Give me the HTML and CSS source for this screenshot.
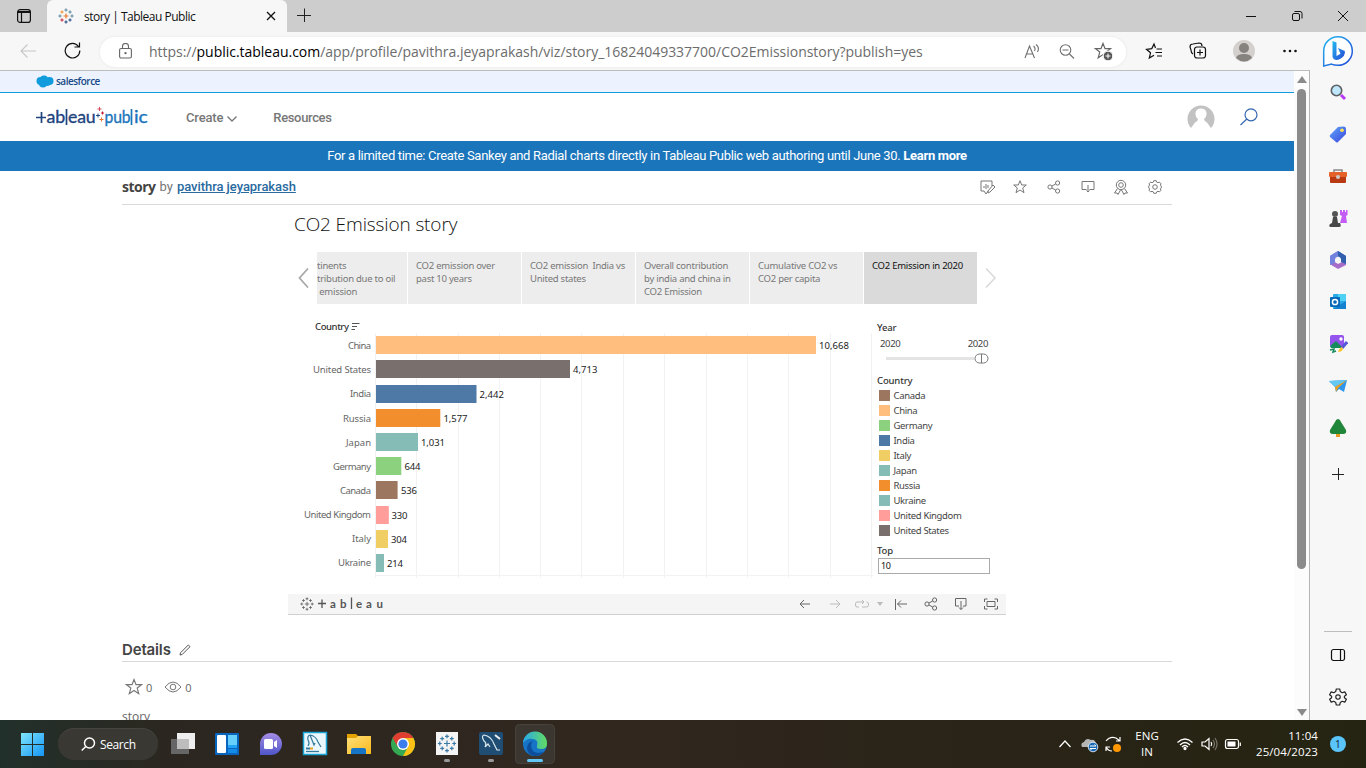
FILE: index.html
```html
<!DOCTYPE html>
<html lang="en">
<head>
<meta charset="utf-8">
<title>story | Tableau Public</title>
<link rel="stylesheet" href="styles.css">
</head>
<body>
<svg width="0" height="0" class="defs">
  <defs>
    <g id="plus"><path d="M-1.6 0H1.6M0-1.6V1.6"/></g>
    <g id="spark">
      <path d="M-2.5 0H2.5M0-2.5V2.5"/>
      <use href="#plus" x="0" y="-6"/><use href="#plus" x="0" y="6"/><use href="#plus" x="-6" y="0"/><use href="#plus" x="6" y="0"/>
      <use href="#plus" x="-4" y="-4"/><use href="#plus" x="4" y="-4"/><use href="#plus" x="-4" y="4"/><use href="#plus" x="4" y="4"/>
    </g>
    <path id="star" d="M0-6.3L1.7-2H6.3L2.7.9 4 5.7 0 3-4 5.7-2.7.9-6.3-2H-1.7Z"/>
    <g id="share"><circle cx="-4" cy="0" r="2.1"/><circle cx="3.6" cy="-4" r="2.1"/><circle cx="3.6" cy="4" r="2.1"/><path d="M-2.1-1L1.7-3M-2.1 1L1.7 3"/></g>
    <linearGradient id="win" x1="0" y1="0" x2="1" y2="1"><stop offset="0" stop-color="#7fe6fb"/><stop offset="1" stop-color="#1495f5"/></linearGradient>
    <linearGradient id="bing" x1="0" y1="0" x2="1" y2="1"><stop offset="0" stop-color="#24b9ee"/><stop offset="1" stop-color="#2448d8"/></linearGradient>
    <linearGradient id="tag" x1="0" y1="0" x2="1" y2="1"><stop offset="0" stop-color="#5fa5fb"/><stop offset="1" stop-color="#3a46dc"/></linearGradient>
    <linearGradient id="edgeA" x1="0" y1="0" x2="1" y2="0"><stop offset="0" stop-color="#2aa9e8"/><stop offset="1" stop-color="#62dc62"/></linearGradient>
    <linearGradient id="folder" x1="0" y1="0" x2="1" y2="1"><stop offset="0" stop-color="#ffe07a"/><stop offset="1" stop-color="#f9b81c"/></linearGradient>
    <linearGradient id="chat" x1="0" y1="0" x2="0" y2="1"><stop offset="0" stop-color="#a58de6"/><stop offset="1" stop-color="#4f55c8"/></linearGradient>
  </defs>
</svg>

<header class="tabstrip">
  <svg class="workspaces" width="14" height="14" fill="none" stroke="#111" stroke-width="1.2"><rect x=".6" y=".6" width="12.800" height="12.800" rx="2.500"/><path d="M1 3H13" stroke-width="2"/><path d="M4.500 4V13"/></svg>
  <div class="tab">
    <svg width="16" height="16" viewBox="-8 -8 16 16" fill="none" stroke-width="1"><path d="M-2.500 0H2.500M0-2.500V2.500" stroke="#e8762c" stroke-width="1.200"/><g stroke="#5b879b"><use href="#plus" y="-6"/><use href="#plus" x="6"/><use href="#plus" x="-6"/></g><g stroke="#eb912c"><use href="#plus" x="-4" y="-4"/></g><g stroke="#59879b"><use href="#plus" x="4" y="-4"/></g><g stroke="#c72035"><use href="#plus" x="-4" y="4"/></g><g stroke="#1f447e"><use href="#plus" x="4" y="4"/><use href="#plus" y="6"/></g></svg>
    <span class="tab-title">story | Tableau Public</span>
    <svg class="tab-close" width="10" height="10" stroke="#111" stroke-width="1.3"><path d="M1 1L9 9M9 1L1 9"/></svg>
  </div>
  <svg class="newtab" width="14" height="14" stroke="#222" stroke-width="1"><path d="M0 7.500H14M7.500 .5V14"/></svg>
  <div class="winctl">
    <svg width="46" height="32" stroke="#111" fill="none"><path d="M18 16.500H28"/></svg>
    <svg width="46" height="32" stroke="#111" fill="none"><rect x="18.500" y="13.500" width="7" height="7" rx="1.500"/><path d="M20.500 11.500H26A2 2 0 0 1 28 13.500V18.500"/></svg>
    <svg width="46" height="32" stroke="#111" fill="none"><path d="M18 11L28 21M28 11L18 21"/></svg>
  </div>
</header>

<div class="toolbar">
  <svg class="back" width="16" height="14" fill="none" stroke="#c6c6c6" stroke-width="1.100"><path d="M16 7H1M7.500 .5L1 7L7.500 13.500"/></svg>
  <svg class="reload" width="17" height="17" fill="none" stroke="#111" stroke-width="1.200"><path d="M14.500 4.500A7.300 7.300 0 1 0 15.800 8.500M15.500 .5V5H10.500"/></svg>
  <div class="address">
    <svg class="lock" width="13" height="16" fill="none" stroke="#666" stroke-width="1.100"><rect x=".6" y="5.500" width="11.800" height="9.500" rx="1.500"/><path d="M3.500 5.500V3.500A3 3 0 0 1 9.500 3.500V5.500"/><circle cx="6.500" cy="10.200" r=".6" fill="#666"/></svg>
    <span class="url">https://<b>public.tableau.com</b>/app/profile/pavithra.jeyaprakash/viz/story_16824049337700/CO2Emissionstory?publish=yes</span>
    <div class="address-tools">
      <svg width="36" height="30" viewBox="-18 -15 36 30" fill="none" stroke="#707070" stroke-width="1.100"><path d="M-7 6L-2.500-6L2.500 6M-5.500 2H1M1.500-6Q4-4 2.500-1M4-7.500Q8-4.500 5.500 0"/></svg>
      <svg width="36" height="30" viewBox="-18 -15 36 30" fill="none" stroke="#707070" stroke-width="1.100"><circle cx="-2.500" cy="-2" r="5.300"/><path d="M1.500 2L6 6.500M-5.500-2H.5"/></svg>
      <svg width="36" height="30" viewBox="-18 -15 36 30" fill="none" stroke="#666" stroke-width="1"><use href="#star" transform="translate(-1 -1) scale(1.2)"/><circle cx="4" cy="4" r="4.800" fill="#555" stroke="#fff"/><path d="M1.500 4H6.500M4 1.500V6.500" stroke="#fff"/></svg>
    </div>
  </div>
  <div class="browser-tools">
    <svg width="44" height="38" viewBox="-22 -19 44 38" fill="none" stroke="#111" stroke-width="1.200"><path d="M1.500-3L0-7-2.200-2.400-7.500-1.700-3.500 1.800-4.700 7 0 4.300M2.500-2H8M1.500 1.500H8M3 5H8"/></svg>
    <svg width="44" height="38" viewBox="-22 -19 44 38" fill="none" stroke="#111" stroke-width="1.200"><path d="M-5 3Q-7 2-7-1L-8-4Q-8-7-5-7L1-8Q4-8 4-5"/><rect x="-3.500" y="-4" width="11" height="11" rx="2.500"/><path d="M-1 1.500H5M2-1.500V4.500"/></svg>
    <svg width="48" height="38" viewBox="-24 -19 48 38"><circle r="11" fill="#d3d0cd"/><circle cy="-3" r="5" fill="#86827e"/><path d="M-8 7Q-7 3 0 3Q7 3 8 7Q0 14-8 7" fill="#86827e"/></svg>
    <svg width="44" height="38" viewBox="-22 -19 44 38" fill="#111"><circle cx="-5.500" r="1.300"/><circle r="1.300"/><circle cx="5.500" r="1.300"/></svg>
    <svg class="bing" width="34" height="34" viewBox="-17 -17 34 34"><path d="M-14.300 15V0A14.300 14.300 0 1 1 0 14.300Q-4 14.300-6.500 13.100Z" fill="#fff" stroke="url(#bing)" stroke-width="1.500"/><path d="M-5.500-10L-1.500-8.500V5L2.500 2.800L0-3L6.800 0Q8 5 1 8.500Q-4 10-5.500 6Z" fill="url(#bing)"/></svg>
  </div>
</div>

<div class="middle">
  <div class="viewport">
    <main class="page">
      <div class="sf-bar">
        <svg width="18" height="13" fill="#109cdc"><circle cx="4.500" cy="6" r="4"/><circle cx="8" cy="4.500" r="4"/><circle cx="13.500" cy="6" r="4"/><circle cx="7" cy="8.500" r="4"/><circle cx="11" cy="7.500" r="3.500"/></svg>
        <span>salesforce</span>
      </div>
      <nav class="site-nav">
        <svg class="logo" width="114" height="26" viewBox="0 0 114 26">
          <g stroke="#1f447e" stroke-width="1.700"><path d="M0 13.500H10M5.500 8V19M30.500 5V21"/></g>
          <path d="M95.500 5V21" stroke="#1b75bb" stroke-width="1.700"/>
          <g class="logo-a"><text x="10.500" y="18.500" textLength="18.500" lengthAdjust="spacingAndGlyphs">ab</text><text x="32" y="18.500" textLength="27.500" lengthAdjust="spacingAndGlyphs">eau</text></g>
          <g class="logo-b"><text x="68.500" y="18.500" textLength="26" lengthAdjust="spacingAndGlyphs">pub</text><text x="98" y="18.500" textLength="13.500" lengthAdjust="spacingAndGlyphs">ic</text></g>
          <g stroke-width="1"><path d="M62 9.500V13.500M60 11.500H64" stroke="#1f447e"/><path d="M63.500 3V7M61.500 5H65.500" stroke="#d9485f"/><path d="M66.500 7.500V10.500M65 9H68" stroke="#c72035"/><path d="M65.500 13.500V17.500M63.500 15.500H67.500" stroke="#e8762c"/></g>
        </svg>
        <a class="nav-create">Create</a>
        <svg class="caret" width="10" height="6" fill="none" stroke="#777" stroke-width="1.300"><path d="M.5 .5L5 5L9.500 .5"/></svg>
        <a class="nav-res">Resources</a>
        <svg class="user" width="28" height="24" viewBox="0 0 28 24"><path d="M4 24A13.500 13.500 0 1 1 24 24L20 18.500Q17 17 17 15Q20 13 19.500 9Q19 4.500 14 4.500Q9 4.500 8.500 9Q8 13 11 15Q11 17 8 18.500Z" fill="#c2c2c2"/></svg>
        <svg class="find" width="18" height="18" fill="none" stroke="#3467b0" stroke-width="1.200"><circle cx="11" cy="6.800" r="6"/><path d="M6.800 11L.5 17"/></svg>
      </nav>
      <div class="banner"><span>For a limited time: Create Sankey and Radial charts directly in Tableau Public web authoring until June 30.</span>&nbsp;<b>Learn more</b></div>

      <section class="column">
        <div class="byline">
          <b>story</b><span class="by">by</span><a>pavithra jeyaprakash</a>
          <div class="actions">
            <svg viewBox="-10 -10 20 20"><path d="M5-1V-6H-6V4H-3L-1 7 1 4M-3-1V1M-1-3V2M1-2V1M1 4L6-2 8 0 3 5 1 6Z"/></svg>
            <svg viewBox="-10 -10 20 20"><use href="#star"/></svg>
            <svg viewBox="-10 -10 20 20"><use href="#share"/></svg>
            <svg viewBox="-10 -10 20 20"><path d="M-1.500 2.500H-6V-5.500H6V2.500H1.500M0-2V5M-1.500 3.500L0 5 1.500 3.500"/></svg>
            <svg viewBox="-10 -10 20 20"><circle cy="-2" r="4.700"/><circle cy="-2" r="2.300"/><path d="M-3.500 1.500L-6.500 6H-4L-3 7.500-.5 3M3.500 1.500L6.500 6H4L3 7.500 .5 3"/></svg>
            <svg viewBox="-10 -10 20 20"><path d="M-1.200-6.300H1.200L1.700-4.900 3-4.300 4.400-4.900 6-3.200 5.300-1.900 6.300-.9V.9L5.300 1.900 6 3.200 4.400 4.900 3 4.300 1.700 4.900 1.200 6.300H-1.200L-1.700 4.900-3 4.300-4.400 4.900-6 3.200-5.300 1.900-6.300 .9V-.9L-5.300-1.900-6-3.200-4.400-4.900-3-4.300-1.700-4.900Z"/><circle r="2.300"/></svg>
          </div>
        </div>

        <div class="viz">
          <h1>CO2 Emission story</h1>
          <div class="story-nav">
            <svg width="11" height="20" fill="none" stroke="#a8a8a8" stroke-width="1.700"><path d="M10 .5L1.500 10L10 19.500"/></svg>
            <div class="points">
              <div class="point first"><p>tinents<br>tribution due to oil<br>&nbsp;emission</p></div>
              <div class="point">CO2 emission over<br>past 10 years</div>
              <div class="point">CO2 emission&nbsp; India vs<br>United states</div>
              <div class="point">Overall contribution<br>by india and china in<br>CO2 Emission</div>
              <div class="point">Cumulative CO2 vs<br>CO2 per capita</div>
              <div class="point active">CO2 Emission in 2020</div>
            </div>
            <svg width="11" height="20" fill="none" stroke="#d8d8d8" stroke-width="1.500"><path d="M1 .5L10 10L1 19.500"/></svg>
          </div>

          <div class="dash">
            <svg class="chart" width="585" height="264" viewBox="288 316 585 264">
              <path class="grid" d="M375.500 333V578M416.500 333V578M458.500 333V578M499.500 333V578M540.500 333V578M581.500 333V578M623.500 333V578M664.500 333V578M706.500 333V578M747.500 333V578M788.500 333V578M830.500 333V578M871.500 333V578M376 575.500H873"/>
              <text class="hd" x="315" y="330" textLength="34">Country</text>
              <path d="M352 323.500H359.500M352 326.500H357M351.500 329.500H355" stroke="#555" stroke-width="1.200"/>
              <g class="bars">
                <rect x="376" y="336" width="440" height="18" fill="#ffbe7d"/>
                <rect x="376" y="360" width="194" height="18" fill="#79706e"/>
                <rect x="376" y="385" width="100.500" height="18" fill="#4e79a7"/>
                <rect x="376" y="409" width="64.300" height="18" fill="#f28e2b"/>
                <rect x="376" y="433" width="42" height="18" fill="#86bcb6"/>
                <rect x="376" y="457" width="25.300" height="18" fill="#8cd17d"/>
                <rect x="376" y="481" width="21.600" height="18" fill="#9d7660"/>
                <rect x="376" y="506" width="12.800" height="18" fill="#ff9d9a"/>
                <rect x="376" y="530" width="12" height="18" fill="#f1ce63"/>
                <rect x="376" y="554" width="8" height="18" fill="#86bcb6"/>
              </g>
              <g class="names">
                <text x="348" y="349" textLength="23">China</text><text x="313" y="373" textLength="58">United States</text><text x="350" y="397" textLength="21">India</text><text x="343" y="422" textLength="28">Russia</text><text x="346" y="446" textLength="25">Japan</text><text x="333" y="470" textLength="38">Germany</text><text x="340" y="494" textLength="31">Canada</text><text x="304" y="518" textLength="67">United Kingdom</text><text x="352" y="542" textLength="19">Italy</text><text x="338" y="566" textLength="33">Ukraine</text>
              </g>
              <g class="vals">
                <text x="819" y="349" textLength="30">10,668</text><text x="573" y="373" textLength="24.500">4,713</text><text x="479.500" y="398" textLength="24.500">2,442</text><text x="443.500" y="422" textLength="24">1,577</text><text x="421" y="446" textLength="24">1,031</text><text x="404.500" y="470" textLength="16">644</text><text x="401" y="494" textLength="16">536</text><text x="391.500" y="519" textLength="16">330</text><text x="391" y="543" textLength="16">304</text><text x="387" y="567" textLength="16">214</text>
              </g>
            </svg>
            <aside class="filters">
              <h2>Year</h2>
              <div class="range"><span>2020</span><span>2020</span></div>
              <div class="slider"><i></i><svg width="15" height="11" fill="#fff" stroke="#777"><rect x="1" y="1" width="13" height="9" rx="4.500"/><path d="M7.500 1V10"/></svg></div>
              <h2 class="lg">Country</h2>
              <ul>
                <li class="k1">Canada</li><li class="k2">China</li><li class="k3">Germany</li><li class="k4">India</li><li class="k5">Italy</li><li class="k6">Japan</li><li class="k7">Russia</li><li class="k8">Ukraine</li><li class="k9">United Kingdom</li><li class="k10">United States</li>
              </ul>
              <h2 class="top">Top</h2>
              <div class="field">10</div>
            </aside>
          </div>

          <footer class="vizbar">
            <svg width="14" height="14" viewBox="-8 -8 16 16" fill="none" stroke="#666" stroke-width="1"><use href="#spark"/></svg>
            <svg class="wordmark" width="68" height="16" viewBox="0 0 68 16"><path d="M0 7.500H8M4 3.500V12M33.500 1.500V13" stroke="#555" stroke-width="1.300"/><text x="12" y="11.500">a</text><text x="22" y="11.500">b</text><text x="38" y="11.500">e</text><text x="48" y="11.500">a</text><text x="58.500" y="11.500">u</text></svg>
            <div class="vizbar-tools">
              <svg width="30" height="16" viewBox="-15 -8 30 16"><path d="M5 0H-5M-1-4L-5 0L-1 4"/></svg>
              <svg class="dim" width="29" height="16" viewBox="-15 -8 29 16"><path d="M-5 0H5M1-4L5 0L1 4"/></svg>
              <svg class="dim" width="24" height="16" viewBox="-13 -8 24 16"><path d="M-3 3H-5Q-6.500 3-6.500 1V0Q-6.500-2-5-2H2M0-4L2-2L0 0M0 3H4.500Q6.500 3 6.500 1V0Q6.500-2 4.500-2"/></svg>
              <svg width="14" height="16" viewBox="-7 -8 14 16"><path d="M-3-2H3L0 2Z" fill="#bbb" stroke="none"/></svg>
              <svg width="29" height="16" viewBox="-14 -8 29 16"><path d="M-5.500-5V6M6 0H-3.500M0-3.500L-3.500 0L0 3.500"/></svg>
              <svg width="30" height="16" viewBox="-15 -8 30 16"><use href="#share"/></svg>
              <svg width="30" height="16" viewBox="-15 -8 30 16"><path d="M-2 2H-5.500V-5.500H5V2H2M0-3V5.500M-2 3.500L0 5.500 2 3.500"/></svg>
              <svg width="30" height="16" viewBox="-15 -8 30 16"><path d="M-6.500-2V-5H-3.500M3.500-5H6.500V-2M6.500 2V5H3.500M-3.500 5H-6.500V2M-4-2.500H4V2.500H-4Z"/></svg>
            </div>
          </footer>
        </div>

        <div class="details"><h3>Details</h3><svg width="12" height="12" fill="none" stroke="#555"><path d="M1 11L1.500 8.800L9.300 1L11 2.700L3.200 10.500Z"/></svg></div>
        <div class="stats">
          <svg width="18" height="18" viewBox="-9 -9 18 18" fill="none" stroke="#777"><use href="#star" transform="scale(1.180)"/></svg><span>0</span>
          <svg class="eye" width="18" height="12" fill="none" stroke="#777"><path d="M1 6Q9-4 17 6Q9 16 1 6Z"/><circle cx="9" cy="6" r="2.800"/></svg><span>0</span>
        </div>
        <p class="desc">story</p>
      </section>
    </main>
    <div class="scrollbar"><i class="up"></i><i class="thumb"></i><i class="down"></i></div>
  </div>

  <aside class="sidebar">
    <svg viewBox="-10 -10 20 20"><path d="M3 3L7 7" stroke="#b83af0" stroke-width="3"/><circle cx="-1.500" cy="-1.500" r="5.200" fill="#bfe6fb" stroke="#5e6163" stroke-width="1.600"/></svg>
    <svg viewBox="-10 -10 20 20"><path d="M-8 1L0-7L6-7.500Q8-7.500 8-5V0L0 8Q-1 9-2 8L-8 3Q-8.500 2-8 1Z" fill="url(#tag)"/><circle cx="4" cy="-3.800" r="1.800" fill="#ffe34d"/></svg>
    <svg viewBox="-10 -10 20 20"><path d="M-4-3V-6H4V-3" fill="none" stroke="#888" stroke-width="1.500"/><rect x="-9" y="-4" width="18" height="5" rx="1" fill="#e4622a"/><path d="M-8 1H8V6Q8 7 7 7H-7Q-8 7-8 6Z" fill="#b93a12"/><circle cy="1" r="2" fill="#ccc"/></svg>
    <svg viewBox="-10 -10 20 20"><path d="M2-8H4V-6H5V-8H7V-6H8V-8H9.500V-3L8 -2 9 5H2L4-2 2-3Z" fill="#c45cf6"/><circle cx="-3" cy="-4" r="3" fill="#555"/><path d="M-5-1H-1L0 5H2Q4 9 1 9H-7Q-10 9-8 6L-6 5Z" fill="#484848"/></svg>
    <svg viewBox="-10 -10 20 20"><path d="M0-9L8-4V3L3 0L0-4L-3 0V7L-8 4V-4Z" fill="#4a78d8"/><path d="M-8 4L-3 2L0 4L8 0V5L0 9Z" fill="#a66cc8"/><path d="M-8-4L0-9V-4L-3-1V3L-8 5Z" fill="#7382dc"/><path d="M8-4V4L3 2V-2L0-4V-9Z" fill="#315fae"/><circle r="3" fill="#f7f7f7"/></svg>
    <svg viewBox="-10 -10 20 20"><rect x="-5" y="-8" width="13" height="15" rx="1" fill="#29a8ea"/><path d="M0-8H8V-1H0Z" fill="#50d0f5"/><path d="M-5 7L8-1V7Z" fill="#1480d0"/><rect x="-8" y="-5" width="10" height="10" rx="1" fill="#0669b8"/><circle cx="-3" r="2.600" fill="none" stroke="#fff" stroke-width="1.500"/></svg>
    <svg viewBox="-10 -10 20 20"><rect x="-8" y="-9" width="14" height="12" rx="2" fill="#9553ed"/><path d="M-8 2L-2-3L5 4H-7Z" fill="#168b5c"/><circle cx="3" cy="-5" r="1.700" fill="#fff"/><path d="M9-2L4 4" stroke="#5857d5" stroke-width="3"/><path d="M4 3Q1 4 0 8Q4 8 5 5Z" fill="#ffc52c"/><path d="M-8 6L-4 5L-5 8L-2 7" stroke="#168b5c" fill="none" stroke-width="1.500"/></svg>
    <svg viewBox="-10 -10 20 20"><path d="M-9-5L9-6L6 6L1 3L-2 6L-3 1Z" fill="#3096eb"/><path d="M-9-5L9-6L-3 1Z" fill="#65c8f1"/><path d="M9-6L-3 1L-2 6L0 2Z" fill="#efa21c"/></svg>
    <svg viewBox="-10 -10 20 20"><rect x="-2" y="3" width="4" height="6" fill="#e79b20"/><path d="M0-9Q2-9 3-6L8 2Q9 6 5 6H-5Q-9 6-8 2L-3-6Q-2-9 0-9Z" fill="#208639"/></svg>
    <svg class="add" viewBox="-10 -10 20 20"><path d="M-6 .5H6M.5-6V6" stroke="#222" stroke-width="1"/></svg>
    <div class="side-bottom">
      <svg viewBox="-10 -10 20 20" fill="none" stroke="#111" stroke-width="1.200"><rect x="-6.500" y="-5.500" width="13" height="11" rx="2"/><path d="M2.500-5.500V5.500"/></svg>
      <svg viewBox="-10 -10 20 20" fill="none" stroke="#222" stroke-width="1.200"><path d="M-1.700-8H1.700L2.300-5.400 4.200-4.300 6.800-5.100 8.400-2.200 6.400-.8V.8L8.400 2.200 6.800 5.100 4.200 4.300 2.300 5.400 1.700 8H-1.700L-2.300 5.400-4.200 4.300-6.800 5.100-8.400 2.200-6.400 .8V-.8L-8.400-2.200-6.800-5.100-4.200-4.300-2.300-5.400Z" stroke-linejoin="round"/><circle r="2.200"/></svg>
    </div>
  </aside>
</div>

<footer class="taskbar">
  <svg class="start" width="24" height="24" fill="url(#win)"><path d="M0 0H11V11H0ZM12 0H23V11H12ZM0 12H11V23H0ZM12 12H23V23H12Z"/></svg>
  <div class="search"><svg width="15" height="15" fill="none" stroke="#fff" stroke-width="1.500"><circle cx="8.500" cy="6" r="5"/><path d="M4.800 9.500L.7 13.500"/></svg><span>Search</span></div>
  <div class="apps">
    <svg viewBox="-22 -24 44 48"><rect x="-6" y="-11" width="18" height="16" fill="#eee"/><rect x="-12" y="-5" width="18" height="15" fill="#666"/><path d="M-6-5H6V5H-6Z" fill="#bdbdbd"/></svg>
    <svg viewBox="-22 -24 44 48"><rect x="-12" y="-11" width="24" height="22" rx="1" fill="#0865bd"/><rect x="-10" y="-9" width="9" height="18" rx="1" fill="#fff"/><rect x="1" y="-9" width="9" height="10" fill="#66d0fb"/><rect x="1" y="1" width="9" height="3" fill="#21a3f5"/><rect x="1" y="5" width="9" height="4" fill="#148be7"/></svg>
    <svg viewBox="-22 -24 44 48"><path d="M-11 11V0A11 11 0 1 1 0 11Z" fill="url(#chat)"/><rect x="-7" y="-5" width="9" height="10" rx="1.500" fill="#fff"/><path d="M3-2L6-4V4L3 2Z" fill="#fff"/></svg>
    <svg viewBox="-22 -24 44 48"><rect x="-11.500" y="-11.500" width="23" height="22" fill="#eaf8fd" stroke="#18a4d4" stroke-width="1.500"/><path d="M-7 2Q-5-1-7-4Q-8-8-5-9Q1-8 3-2L6 3M-5-9L-1 1L0-1" fill="none" stroke="#37779a" stroke-width="1.200"/><path d="M-9 4.500H-5" stroke="#37779a" stroke-width="2"/><path d="M-5 4.500H-2" stroke="#f0a020" stroke-width="2"/><path d="M-9 7.500H4" stroke="#37779a" stroke-width="1.300"/></svg>
    <svg viewBox="-22 -24 44 48"><path d="M-12-10H-3L-1-8H12V10H-12Z" fill="#e4a100"/><path d="M-12-6H-3L-1-8H12V10H-12Z" fill="url(#folder)"/><path d="M-8 10V6Q-8 4-6 4H5Q7 4 7 6V10Z" fill="#1775c8"/></svg>
    <svg viewBox="-22 -24 44 48"><circle r="12" fill="#35a853"/><path d="M0 0L-10.400-6A12 12 0 0 1 10.400-6Z" fill="#e23d31"/><path d="M0-6H10.400A12 12 0 0 1 0 12L5 3Z" fill="#fbc116"/><path d="M-10.400-6L-5 3L0-6Z" fill="#e23d31"/><circle r="6" fill="#fff"/><circle r="4.600" fill="#3b7ded"/></svg>
    <svg viewBox="-22 -24 44 48"><rect x="-11" y="-12" width="22" height="23" fill="#f4f4f4"/><g fill="none" stroke="#3a78a6" stroke-width="1" transform="translate(0 -.5) scale(1.200)"><use href="#spark"/></g><rect x="-3" y="15" width="6" height="3" rx="1.500" fill="#999"/></svg>
    <svg viewBox="-22 -24 44 48"><rect x="-12" y="-12" width="24" height="23" rx="2" fill="#1f4d73"/><path d="M-6 3Q-4-1-7-3Q-10-8-7-9Q0-8 3 0L6 6 9 6M-6 3L-3 0L-1 3" fill="none" stroke="#dce8ef" stroke-width="1.200"/><path d="M4-9L9-5" stroke="#eee" stroke-width="2"/><rect x="-3" y="15" width="6" height="3" rx="1.500" fill="#999"/></svg>
    <svg viewBox="-22 -24 44 48"><rect x="-19.500" y="-19.500" width="39" height="39" rx="4" fill="#3b3730" stroke="#474239"/><circle r="12" fill="#1673c5"/><path d="M-12-1A12 12 0 0 1 12 0Q12 5 6 5Q1 5 2 2Q4-4-2-5Q-8-6-12-1Z" fill="url(#edgeA)"/><path d="M-4 1Q-4 8 3 9L9 8Q5 12 0 12Q-7 11-8 5Q-8-2-2-3Q-4-1-4 1" fill="#0d4e9c"/><rect x="-8" y="15" width="16" height="3" rx="1.500" fill="#62c7f6"/></svg>
  </div>
  <div class="tray">
    <svg width="24" height="24" viewBox="-12 -12 24 24" fill="none" stroke="#fff" stroke-width="1.200"><path d="M-5.500 3L0-3L5.500 3"/></svg>
    <svg width="24" height="24" viewBox="-12 -12 24 24"><path d="M-7 3Q-9-1-5-2Q-3-7 2-4Q6-5 7 0V3Z" fill="#b5b5b5"/><circle cx="4" cy="3" r="4.800" fill="#1769b8" stroke="#fff" stroke-width=".8"/><path d="M1 2H7L5.500 .5M7 4.500H1L2.500 6" stroke="#fff" fill="none"/></svg>
    <svg width="24" height="24" viewBox="-12 -12 24 24" fill="none" stroke="#fff" stroke-width="1.200"><path d="M-7-3Q-3-8 3-6L7-3M7-7V-3H3M-7 7V3H-3M-7 3Q-5 7-1 7"/><circle cx="4" cy="4" r="4" fill="#ff9800" stroke="none"/></svg>
    <div class="lang">ENG<br>IN</div>
    <svg width="24" height="24" viewBox="-12 -12 24 24" fill="none" stroke="#fff" stroke-width="1.300"><path d="M-7.500-1.500Q0-8.500 7.500-1.500M-5 1Q0-4 5 1M-3 3Q0 0 3 3"/><circle cy="4.500" r="1" fill="#fff"/></svg>
    <svg width="24" height="24" viewBox="-12 -12 24 24" fill="none" stroke="#fff" stroke-width="1.200"><path d="M-7-2H-4L0-5.500V5.500L-4 2H-7ZM2-2Q3.500 0 2 2"/><path d="M4-4Q7 0 4 4M6-6Q10 0 6 6" stroke="#77746b"/></svg>
    <svg width="24" height="24" viewBox="-12 -12 24 24" fill="none" stroke="#fff" stroke-width="1.200"><rect x="-7.500" y="-4.500" width="13" height="9" rx="2"/><rect x="-5.500" y="-2.500" width="8" height="5" fill="#fff" stroke="none"/><path d="M7.300-1.500V2"/></svg>
    <div class="clock">11:04<br>25/04/2023</div>
    <span class="badge">1</span>
  </div>
</footer>
</body>
</html>
```

FILE: styles.css
```css
* { box-sizing: border-box; margin: 0; padding: 0; }
body { width: 1366px; height: 768px; overflow: hidden; display: flex; flex-direction: column; background: #f7f7f7; font-family: "Open Sans", "Noto Sans", sans-serif; }
svg { display: block; flex: none; }
span, a, b { white-space: nowrap; }
.defs { position: absolute; }

.tabstrip { height: 32px; flex: none; display: flex; align-items: flex-start; background: #cdcdcd; }
.workspaces { margin: 9px 16px 0 17px; }
.tab { width: 240px; height: 32px; padding: 0 11px; display: flex; align-items: center; background: #f7f7f7; border-radius: 6px 6px 0 0; }
.tab-title { margin-left: 10px; font-size: 12px; letter-spacing: -.5px; color: #111; }
.tab-close { margin-left: auto; }
.newtab { margin: 8px 0 0 10px; }
.winctl { display: flex; margin-left: auto; }

.toolbar { height: 38px; flex: none; display: flex; align-items: center; padding-left: 20px; background: #f7f7f7; }
.reload { margin: 0 19px 0 28px; }
.back, .reload { margin-top: -1px; }
.address { width: 1026px; height: 30px; margin-top: 1px; padding-left: 19px; display: flex; align-items: center; border-radius: 15px; background: #fff; box-shadow: 0 0 3px #e4e4e4; }
.lock { margin-top: -2px; }
.url { margin: -1px 0 0 17px; font-size: 14px; color: #6c6c6c; letter-spacing: -.025px; }
.url b { font-weight: 400; color: #000; }
.address-tools { display: flex; margin: 0 4px 0 auto; }
.browser-tools { display: flex; align-items: center; margin-left: 6px; }
.bing { margin-left: 9px; }

.middle { flex: 1; min-height: 0; display: flex; }
.viewport { width: 1310px; display: flex; border-top: 1px solid #bdbdbd; border-right: 1px solid #b5b5b5; background: #fff; overflow: hidden; }
.page { width: 1294px; height: 649px; overflow: hidden; color: #555; }
.scrollbar { width: 15px; display: flex; flex-direction: column; align-items: center; background: #fcfcfc; }
.up { margin-top: 5px; border: 5px solid transparent; border-top: 0; border-bottom: 7px solid #8b8b8b; }
.thumb { width: 9px; height: 480px; margin-top: 6px; border-radius: 5px; background: #8b8b8b; }
.down { margin: auto 0 4px; border: 5px solid transparent; border-bottom: 0; border-top: 7px solid #8b8b8b; }

.sf-bar { height: 22px; display: flex; align-items: center; padding-left: 36px; gap: 2px; background: #ecf3fe; border-bottom: 1px solid #129cdc; font-size: 10px; font-weight: 600; letter-spacing: -.5px; color: #194a86; }
.sf-bar span { margin-top: -2px; }
.site-nav { height: 48px; display: flex; align-items: center; padding: 0 36px; font-family: Roboto, sans-serif; font-size: 13px; font-weight: 500; letter-spacing: -.15px; color: #777; }
.logo text { font-family: Lato, sans-serif; font-size: 17px; font-weight: 400; stroke-width: .35px; }
.logo-a { fill: #1f447e; stroke: #1f447e; }
.logo-b { fill: #1b75bb; stroke: #1b75bb; }
.logo g > path { stroke-linecap: butt; }
.nav-create { margin: 0 4px 0 36px; }
.caret { margin-top: 3px; }
.nav-res { margin-left: 36px; letter-spacing: -.35px; }
.user { margin: -3px 0 0 auto; }
.find { margin-left: 25px; }
.banner { height: 30px; display: flex; align-items: center; justify-content: center; padding-bottom: 2px; background: #1b75bb; color: #fff; font-family: Roboto, sans-serif; font-size: 13px; letter-spacing: -.31px; }
.banner b { font-weight: 700; }

.column { width: 1050px; margin-left: 122px; }
.byline { height: 34px; display: flex; align-items: center; padding-bottom: 2px; border-bottom: 1px solid #d9d9d9; font-family: Roboto, sans-serif; font-size: 13px; }
.byline b { font-family: "Open Sans", sans-serif; font-size: 14px; letter-spacing: -.5px; color: #444; }
.by { margin: 0 4px; color: #777; }
.byline a { font-weight: 500; letter-spacing: -.05px; color: #296a9f; text-decoration: underline; }
.actions { display: flex; gap: 13.700px; margin: 0 7px 0 auto; }
.actions svg { width: 20px; height: 20px; fill: none; stroke: #777; stroke-width: 1; }

.viz { width: 718px; margin-left: 166px; font-family: "Noto Sans", sans-serif; }
.viz h1 { height: 47px; padding: 4px 0 0 6px; font: 300 19px/31px "Open Sans", sans-serif; letter-spacing: -.12px; color: #111; }
.story-nav { height: 52px; display: flex; align-items: center; padding-left: 10px; gap: 8px; }
.points { width: 660px; height: 52px; display: flex; gap: 1px; }
.point { width: 113px; height: 52px; padding: 7px 0 0 8px; background: #ededed; color: #777; font-size: 9.500px; line-height: 13px; white-space: nowrap; letter-spacing: -.25px; overflow: hidden; }
.first { width: 90px; padding-left: 0; }
.active { background: #dadada; color: #111; }
.dash { height: 290px; display: flex; padding-top: 12px; }
.grid { fill: none; stroke: #f2f2f2; }
.chart text { font-size: 9.500px; }
.chart .hd { font-weight: 500; fill: #333; }
.names { fill: #666; }
.vals { fill: #222; }
.filters { width: 118px; padding: 5px 0 0 4px; font-size: 9.500px; letter-spacing: -.35px; color: #444; }
.filters h2 { font-size: 9.500px; line-height: 14px; font-weight: 500; letter-spacing: -.15px; color: #333; }
.range { display: flex; justify-content: space-between; padding: 2px 6px 0 3px; width: 117px; line-height: 14px; }
.slider { display: flex; align-items: center; height: 15px; padding-left: 9px; }
.slider i { width: 88px; height: 3px; background: #e4e4e4; }
.filters .lg { margin-top: 8px; }
.filters ul { list-style: none; }
.filters li { height: 15px; display: flex; align-items: center; gap: 3.500px; padding-left: 2px; white-space: nowrap; }
.filters li::before { content: ""; width: 11px; height: 11px; }
.k1::before { background: #9d7660; } .k2::before { background: #ffbe7d; } .k3::before { background: #8cd17d; } .k4::before { background: #4e79a7; } .k5::before { background: #f1ce63; }
.k6::before, .k8::before { background: #86bcb6; } .k7::before { background: #f28e2b; } .k9::before { background: #ff9d9a; } .k10::before { background: #79706e; }
.filters .top { margin-top: 6px; }
.field { width: 112px; height: 16px; margin: 0 0 0 1px; padding-left: 2px; border: 1px solid #aaa; line-height: 14px; color: #111; font-size: 9px; }
.vizbar { height: 21px; display: flex; align-items: center; padding: 0 0 1px 12px; background: #f5f5f5; border-bottom: 1px solid #d0d0d0; }
.wordmark { margin-left: 4px; }
.wordmark text { font-family: Lato, sans-serif; font-size: 11.500px; font-weight: 700; fill: #555; }
.vizbar-tools { display: flex; margin-left: auto; }
.vizbar-tools svg { fill: none; stroke: #666; }
.vizbar-tools .dim { stroke: #bbb; }

.details { height: 47px; display: flex; align-items: center; gap: 8px; padding-top: 23px; border-bottom: 1px solid #d9d9d9; }
.details h3 { font: 600 15px/20px Inter, sans-serif; letter-spacing: -.15px; color: #444; }
.stats { height: 50px; display: flex; align-items: center; padding: 0 0 0 3px; font-size: 11px; color: #666; }
.stats span { margin-left: 3px; }
.eye { margin-left: 12px; }
.desc { margin-top: -2px; font-size: 12px; line-height: 14px; color: #666; }

.sidebar { width: 56px; padding: 1px 1px 0 0; display: flex; flex-direction: column; align-items: center; }
.sidebar svg { width: 20px; height: 20px; margin: 11px 0; }
.sidebar .add { margin-top: 15px; }
.side-bottom { width: 28px; margin: auto 0 2px; padding-top: 2px; border-top: 1px solid #bdbdbd; display: flex; flex-direction: column; align-items: center; }

.taskbar { height: 48px; flex: none; display: flex; align-items: center; padding-left: 21px; color: #fff; background: linear-gradient(90deg, #22302b 0, #2b2720 12%, #31271f 45%, #2b2419 65%, #252412 100%); }
.start { margin-top: 2px; }
.search { width: 100px; height: 32px; margin-left: 13px; padding-left: 23px; display: flex; align-items: center; gap: 4px; border-radius: 16px; background: #393833; box-shadow: inset 0 1px #45443f; font-size: 12px; letter-spacing: -.4px; }
.apps { display: flex; margin-left: 3px; }
.apps svg { width: 44px; height: 48px; }
.tray { display: flex; align-items: center; margin-left: auto; padding-right: 20px; font-size: 11.500px; line-height: 16px; letter-spacing: .1px; }
.lang { width: 44px; text-align: center; }
.lang + svg { margin-left: 4px; }
.clock { width: 73px; text-align: right; }
.badge { width: 16px; height: 16px; margin-left: 12px; border-radius: 8px; background: #5ac5fa; color: #123; text-align: center; font-size: 10px; line-height: 16px; }
```
